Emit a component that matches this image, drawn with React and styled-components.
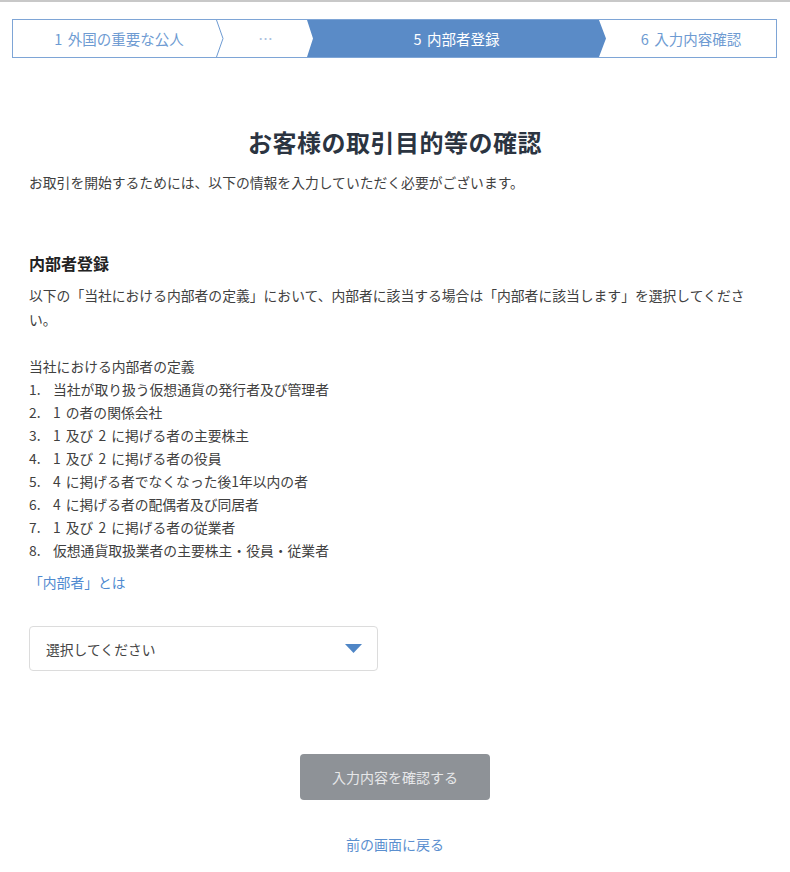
import React from 'react';
import styled, { createGlobalStyle } from 'styled-components';

const GlobalStyle = createGlobalStyle`
  body {
    margin: 0;
    background: #fff;
    font-family: "Noto Sans CJK JP", "Noto Sans", sans-serif;
    color: #404040;
  }
`;

const steps = [
  { label: '1 外国の重要な公人', width: 203, pad: 9 },
  { label: '…', width: 83, muted: true },
  { label: '5 内部者登録', width: 299, active: true },
  { label: '6 入力内容確認', pad: 7 },
];

const definitions = [
  '当社が取り扱う仮想通貨の発行者及び管理者',
  '1 の者の関係会社',
  '1 及び 2 に掲げる者の主要株主',
  '1 及び 2 に掲げる者の役員',
  '4 に掲げる者でなくなった後1年以内の者',
  '4 に掲げる者の配偶者及び同居者',
  '1 及び 2 に掲げる者の従業者',
  '仮想通貨取扱業者の主要株主・役員・従業者',
];

function App() {
  return (
    <Page>
      <GlobalStyle />
      <TopBar />
      <Stepper>
        {steps.map((s, i) => (
          <React.Fragment key={s.label}>
            <Step $width={s.width} $active={s.active} $muted={s.muted} $pad={s.pad}>
              {s.label}
            </Step>
            {i === 0 && (
              <Sep width="8" height="37" viewBox="0 0 8 37">
                <polyline points="0.5,0 7,18.5 0.5,37" fill="none" stroke="#6e9bd2" strokeWidth="1" />
              </Sep>
            )}
          </React.Fragment>
        ))}
      </Stepper>

      <Content>
        <Title>お客様の取引目的等の確認</Title>
        <Lead>お取引を開始するためには、以下の情報を入力していただく必要がございます。</Lead>

        <Heading>内部者登録</Heading>
        <Para>
          以下の「当社における内部者の定義」において、内部者に該当する場合は「内部者に該当します」を選択してください。
        </Para>

        <DefBlock>
          <DefTitle>当社における内部者の定義</DefTitle>
          {definitions.map((d, i) => (
            <DefRow key={i}>
              <Num>{i + 1}.</Num>
              <span>{d}</span>
            </DefRow>
          ))}
        </DefBlock>

        <TextLink href="#">「内部者」とは</TextLink>

        <Select>
          <span>選択してください</span>
          <svg width="17" height="9" viewBox="0 0 17 9">
            <polygon points="0,0 17,0 8.5,9" fill="#4f86c6" />
          </svg>
        </Select>

        <Actions>
          <SubmitButton disabled>入力内容を確認する</SubmitButton>
          <BackLink href="#">前の画面に戻る</BackLink>
        </Actions>
      </Content>
    </Page>
  );
}

export default App;

const Page = styled.div`
  width: 790px;
  min-height: 872px;
`;

const TopBar = styled.div`
  height: 2px;
  background: #c8c8c8;
`;

const Stepper = styled.div`
  display: flex;
  height: 37px;
  margin: 17px 13px 0 12px;
  border: 1px solid #7ea5d6;
  overflow: hidden;
`;

const Step = styled.div`
  flex: ${p => (p.$width ? `0 0 ${p.$width}px` : '1')};
  box-sizing: border-box;
  display: flex;
  align-items: center;
  justify-content: center;
  font-size: 14.5px;
  word-spacing: 2px;
  color: ${p => (p.$active ? '#fff' : p.$muted ? '#a9c0de' : '#6e9bd2')};
  background: ${p => (p.$active ? '#5a8bc7' : 'transparent')};
  margin-right: ${p => (p.$active ? '-7px' : '0')};
  padding-left: ${p => p.$pad || 0}px;
  clip-path: ${p =>
    p.$active
      ? 'polygon(0 0, calc(100% - 7px) 0, 100% 50%, calc(100% - 7px) 100%, 0 100%, 6px 50%)'
      : 'none'};
  position: relative;
  z-index: ${p => (p.$active ? 1 : 0)};
`;

const Sep = styled.svg`
  flex: 0 0 8px;
  display: block;
`;

const Content = styled.div`
  padding: 0 29px;
  font-size: 13.8px;
  word-spacing: 2px;
`;

const Title = styled.h1`
  margin: 66px 0 0;
  text-align: center;
  font-size: 24px;
  letter-spacing: 0.5px;
  line-height: 36px;
  font-weight: 700;
  color: #2b3441;
`;

const Lead = styled.p`
  margin: 11px 0 0;
  line-height: 23px;
`;

const Heading = styled.h2`
  margin: 57px 0 0;
  font-size: 16px;
  line-height: 24px;
  font-weight: 700;
  color: #222;
`;

const Para = styled.p`
  margin: 8px 0 0;
  line-height: 24px;
`;

const DefBlock = styled.div`
  margin-top: 24px;
  line-height: 23px;
`;

const DefTitle = styled.div``;

const DefRow = styled.div`
  display: flex;
`;

const Num = styled.span`
  flex: 0 0 24px;
`;

const TextLink = styled.a`
  display: block;
  margin-top: 9px;
  line-height: 23px;
  color: #4f8ad0;
  text-decoration: none;
`;

const Select = styled.div`
  margin-top: 32px;
  width: 349px;
  height: 45px;
  box-sizing: border-box;
  border: 1px solid #dcdcdc;
  border-radius: 4px;
  display: flex;
  align-items: center;
  justify-content: space-between;
  padding: 0 15px 0 16px;
  color: #444;
`;

const Actions = styled.div`
  display: flex;
  flex-direction: column;
  align-items: center;
`;

const SubmitButton = styled.button`
  margin-top: 83px;
  width: 190px;
  height: 46px;
  border: none;
  border-radius: 4px;
  background: #8e9297;
  color: #e6e7e9;
  font-family: inherit;
  font-size: 14px;
`;

const BackLink = styled.a`
  margin-top: 34px;
  font-size: 14px;
  line-height: 20px;
  color: #5b8fcf;
  text-decoration: none;
`;
